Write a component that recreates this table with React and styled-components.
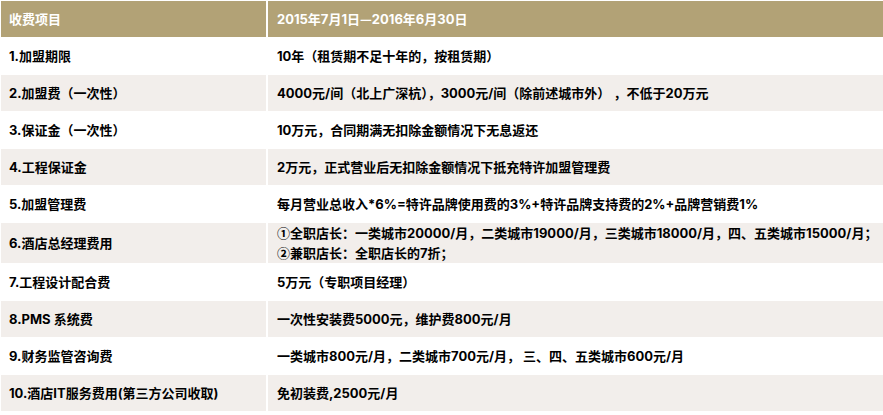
import React from "react";
import styled, { createGlobalStyle } from "styled-components";

const Global = createGlobalStyle`
  html, body { margin: 0; padding: 0; background: #ffffff; }
  body {
    font-family: Inter, "Noto Sans CJK SC", "Noto Sans", sans-serif;
    -webkit-font-smoothing: antialiased;
  }
`;

const Table = styled.div`
  display: flex;
  flex-direction: column;
  gap: 1px;
  padding: 1px 0 0 1px;
  width: 882px;
`;

const Row = styled.div`
  display: grid;
  grid-template-columns: 265px 1fr;
  column-gap: 2px;
  min-height: 36px;
`;

const Cell = styled.div`
  display: flex;
  flex-direction: column;
  justify-content: center;
  padding: 0 8px 0 ${(p) => (p.$right ? "9px" : "8px")};
  background: ${(p) => (p.$head ? "#b2a276" : p.$shade ? "#f2eeeb" : "#ffffff")};
  color: ${(p) => (p.$head ? "#ffffff" : "#000000")};
  font-size: 13px;
  font-weight: 700;
  line-height: 20px;
  white-space: nowrap;
`;

const Cjk = styled.span`
  font-family: "Noto Sans CJK SC", sans-serif;
`;

const rows = [
  ["1.加盟期限", [["", "10年（租赁期不足十年的，按租赁期）"]]],
  ["2.加盟费（一次性）", [["", "4000元/间（北上广深杭），3000元/间（除前述城市外） ，不低于20万元"]]],
  ["3.保证金（一次性）", [["", "10万元，合同期满无扣除金额情况下无息返还"]]],
  ["4.工程保证金", [["", "2万元，正式营业后无扣除金额情况下抵充特许加盟管理费"]]],
  ["5.加盟管理费", [["", "每月营业总收入*6%=特许品牌使用费的3%+特许品牌支持费的2%+品牌营销费1%"]]],
  [
    "6.酒店总经理费用",
    [
      ["①", "全职店长：一类城市20000/月，二类城市19000/月，三类城市18000/月，四、五类城市15000/月；"],
      ["②", "兼职店长：全职店长的7折；"],
    ],
  ],
  ["7.工程设计配合费", [["", "5万元（专职项目经理）"]]],
  ["8.PMS 系统费", [["", "一次性安装费5000元，维护费800元/月"]]],
  ["9.财务监管咨询费", [["", "一类城市800元/月，二类城市700元/月， 三、四、五类城市600元/月"]]],
  ["10.酒店IT服务费用(第三方公司收取)", [["", "免初装费,2500元/月"]]],
];

export default function App() {
  return (
    <>
      <Global />
      <Table>
        <Row>
          <Cell $head>收费项目</Cell>
          <Cell $head $right>
            <span>
              2015年7月1日<Cjk>—</Cjk>2016年6月30日
            </span>
          </Cell>
        </Row>
        {rows.map(([label, lines], i) => (
          <Row key={label}>
            <Cell $shade={i % 2 === 1}>{label}</Cell>
            <Cell $shade={i % 2 === 1} $right>
              {lines.map(([mark, text]) => (
                <span key={text}>
                  {mark && <Cjk>{mark}</Cjk>}
                  {text}
                </span>
              ))}
            </Cell>
          </Row>
        ))}
      </Table>
    </>
  );
}
